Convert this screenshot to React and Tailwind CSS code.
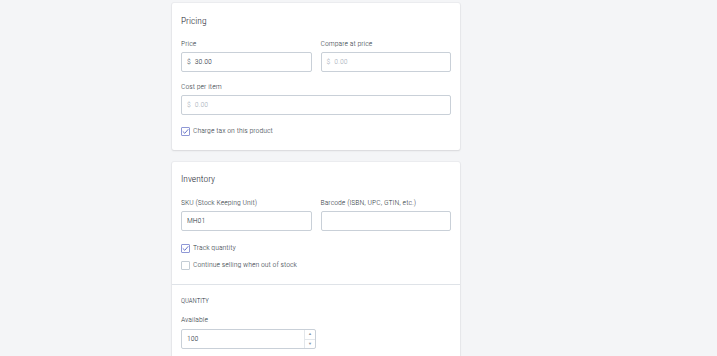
import React from "react";

function Check({ checked }) {
  return (
    <span
      className={
        "flex h-[9px] w-[9px] items-center justify-center rounded-[1px] border bg-white " +
        (checked ? "border-[#8f98d6]" : "border-[#c4cdd5]")
      }
    >
      {checked && (
        <svg width="7" height="7" viewBox="0 0 10 10" fill="none">
          <path d="M1.5 5.2 L4 7.6 L8.6 2.2" stroke="#5c6ac4" strokeWidth="1.3" strokeLinecap="round" strokeLinejoin="round" />
        </svg>
      )}
    </span>
  );
}

function Label({ children, className = "" }) {
  return <div className={"h-[10px] text-[7.8px] leading-[10px] text-[#333c46] " + className}>{children}</div>;
}

function Input({ children, className = "" }) {
  return (
    <div className={"flex h-[20px] items-center rounded-[2px] border border-[#c9d0d8] bg-white px-[5px] text-[7.8px] text-[#212b36] " + className}>
      {children}
    </div>
  );
}

function CheckRow({ checked, children, className = "" }) {
  return (
    <div className={"flex h-[10px] items-center gap-[3px] text-[7.8px] leading-[10px] text-[#333c46] " + className}>
      <Check checked={checked} />
      <span>{children}</span>
    </div>
  );
}

export default function App() {
  return (
    <div
      className="h-[356px] w-[717px] overflow-hidden bg-[#f4f5f7] pt-[3px] font-light"
      style={{ fontFamily: "'Roboto Condensed', Lato, 'Liberation Sans', sans-serif" }}
    >
      <div className="ml-[172px] w-[288px]">
        {/* Pricing card */}
        <div className="rounded-[2px] bg-white px-[9px] pt-[12px] pb-[14px] shadow-[0_0_0_1px_rgba(63,63,68,0.04),0_1px_2px_rgba(63,63,68,0.12)]">
          <div className="h-[12px] text-[9.5px] leading-[12px] text-[#1c2530]">Pricing</div>
          <div className="mt-[12px] grid grid-cols-2 gap-x-[9px]">
            <div>
              <Label>Price</Label>
              <Input className="mt-[3px]">
                <span className="text-[#454f5b]">$</span>
                <span className="ml-[4px]">30.00</span>
              </Input>
            </div>
            <div>
              <Label>Compare at price</Label>
              <Input className="mt-[3px] text-[#a3adb7]">
                <span>$</span>
                <span className="ml-[4px]">0.00</span>
              </Input>
            </div>
          </div>
          <Label className="mt-[10px]">Cost per item</Label>
          <Input className="mt-[3px] text-[#a3adb7]">
            <span>$</span>
            <span className="ml-[4px]">0.00</span>
          </Input>
          <CheckRow checked className="mt-[11px]">Charge tax on this product</CheckRow>
        </div>

        {/* Inventory card */}
        <div className="mt-[12px] rounded-[2px] bg-white shadow-[0_0_0_1px_rgba(63,63,68,0.04),0_1px_2px_rgba(63,63,68,0.12)]">
          <div className="border-b border-[#dfe3e8] px-[9px] pt-[11px] pb-[14px]">
            <div className="h-[12px] text-[9.5px] leading-[12px] text-[#1c2530]">Inventory</div>
            <div className="mt-[13px] grid grid-cols-2 gap-x-[9px]">
              <div>
                <Label>SKU (Stock Keeping Unit)</Label>
                <Input className="mt-[3px]">MH01</Input>
              </div>
              <div>
                <Label>Barcode (ISBN, UPC, GTIN, etc.)</Label>
                <Input className="mt-[3px]" />
              </div>
            </div>
            <CheckRow checked className="mt-[12px]">Track quantity</CheckRow>
            <CheckRow className="mt-[7px]">Continue selling when out of stock</CheckRow>
          </div>
          <div className="px-[9px] pt-[11px] pb-[20px]">
            <div className="h-[10px] text-[6.8px] leading-[10px] text-[#212b36]">QUANTITY</div>
            <Label className="mt-[9px]">Available</Label>
            <div className="mt-[4px] flex h-[20px] w-[135px] items-stretch rounded-[2px] border border-[#c9d0d8] bg-white text-[7.8px] text-[#212b36]">
              <div className="flex flex-1 items-center px-[5px]">100</div>
              <div className="flex w-[11px] flex-col border-l border-[#e3e7eb]">
                <div className="flex flex-1 items-center justify-center border-b border-[#e3e7eb] text-[4px] leading-none text-[#8a95a0]">▲</div>
                <div className="flex flex-1 items-center justify-center text-[4px] leading-none text-[#8a95a0]">▼</div>
              </div>
            </div>
          </div>
        </div>
      </div>
    </div>
  );
}
